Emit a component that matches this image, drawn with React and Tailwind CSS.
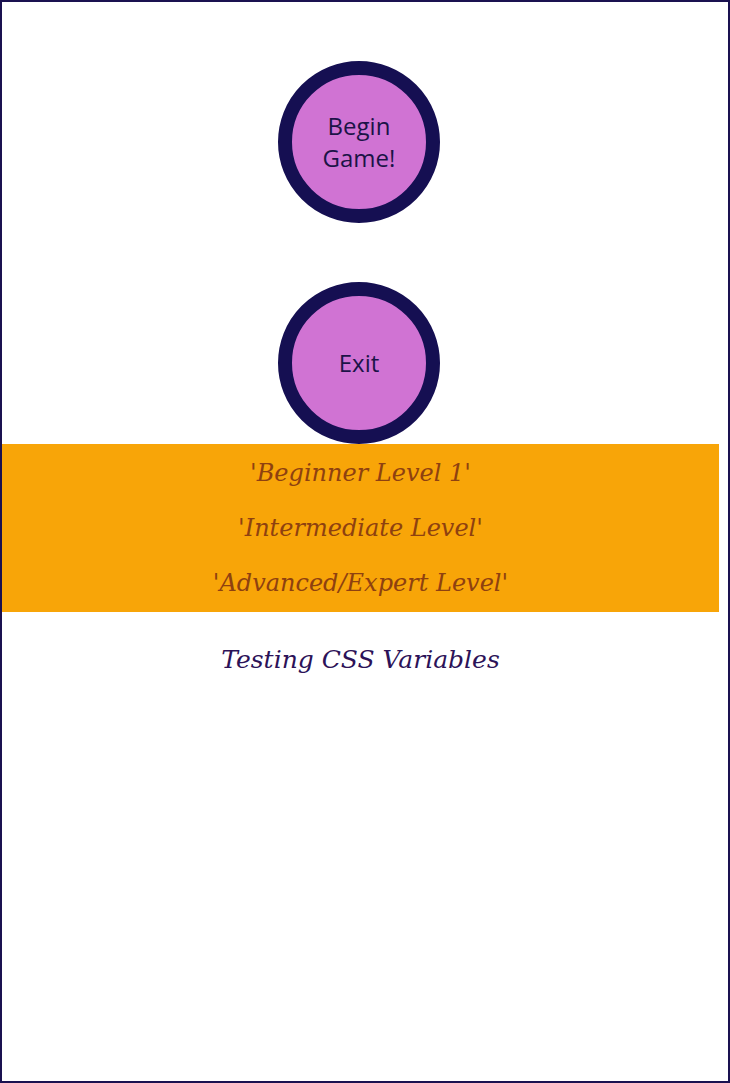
import React from "react";

function RoundButton({ children }) {
  return (
    <button
      type="button"
      className="flex h-[162px] w-[162px] items-center justify-center rounded-full border-[14px] border-[#150f52] bg-[#d073d3] text-center text-[24px] leading-[32px] text-[#1b1347]"
      style={{ fontFamily: "'Open Sans', 'Noto Sans', sans-serif" }}
    >
      {children}
    </button>
  );
}

export default function App() {
  const levels = [
    "'Beginner Level 1'",
    "'Intermediate Level'",
    "'Advanced/Expert Level'",
  ];

  return (
    <div className="h-[1083px] w-[730px] overflow-hidden border-2 border-[#1a1150] bg-white">
      <div className="flex w-[717px] flex-col items-center pt-[59px]">
        <div className="mr-[3px]">
          <RoundButton>
            Begin
            <br />
            Game!
          </RoundButton>
        </div>
        <div className="h-[59px]" />
        <div className="mr-[3px]">
          <RoundButton>Exit</RoundButton>
        </div>

        <div className="flex w-full flex-col items-center bg-[#f8a508] pt-[2px] pb-[1px]">
          {levels.map((level) => (
            <p
              key={level}
              className="text-[24px] italic leading-[55px] text-[#8e4110]"
              style={{ fontFamily: "'DejaVu Serif', 'Liberation Serif', serif" }}
            >
              {level}
            </p>
          ))}
        </div>

        <p
          className="mt-[28px] text-[25px] italic leading-[40px] text-[#2c1258]"
          style={{ fontFamily: "'DejaVu Serif', 'Liberation Serif', serif" }}
        >
          Testing CSS Variables
        </p>
      </div>
    </div>
  );
}
